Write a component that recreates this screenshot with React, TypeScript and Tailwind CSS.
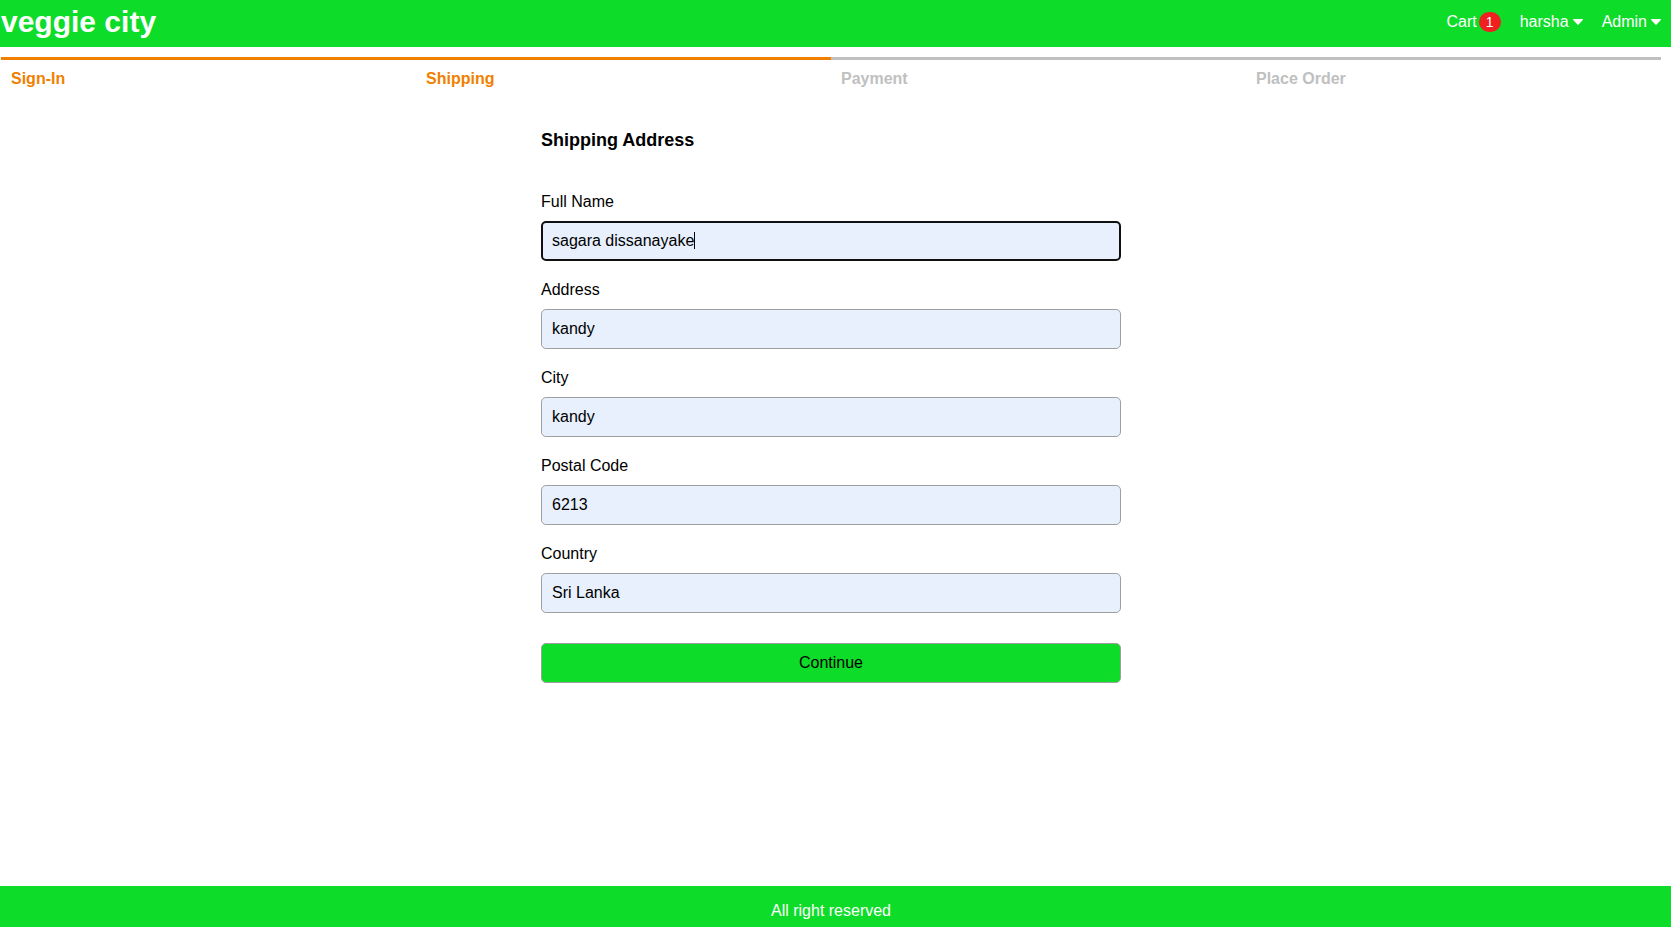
import { useState } from 'react';

const steps = [
  { name: 'Sign-In', done: true },
  { name: 'Shipping', done: true },
  { name: 'Payment', done: false },
  { name: 'Place Order', done: false },
];

const fields = [
  { id: 'fullName', label: 'Full Name', value: 'sagara dissanayake' },
  { id: 'address', label: 'Address', value: 'kandy' },
  { id: 'city', label: 'City', value: 'kandy' },
  { id: 'postalCode', label: 'Postal Code', value: '6213' },
  { id: 'country', label: 'Country', value: 'Sri Lanka' },
];

function Caret() {
  return (
    <svg width="10" height="6" viewBox="0 0 10 6" fill="currentColor" aria-hidden="true">
      <path d="M0.6 0h8.8c.6 0 .8.6.4 1L5.6 5.4c-.3.3-.9.3-1.2 0L.2 1C-.2.6 0 0 .6 0z" />
    </svg>
  );
}

function Header() {
  return (
    <header className="flex h-[47px] items-center justify-between bg-[#0ddc28] pr-[10px] pl-px pb-1 text-white">
      <a href="#home" className="text-[30px] leading-[34px] font-bold">
        veggie city
      </a>
      <nav className="flex items-center gap-[19px] leading-5">
        <a href="#cart" className="flex items-center gap-[2px]">
          Cart
          <span className="flex h-5 w-[22px] items-center justify-center rounded-full bg-[#f02020] text-sm">
            1
          </span>
        </a>
        <button type="button" className="flex items-center gap-1">
          harsha <Caret />
        </button>
        <button type="button" className="flex items-center gap-1">
          Admin <Caret />
        </button>
      </nav>
    </header>
  );
}

function CheckoutSteps() {
  return (
    <ol className="mt-[10px] mr-[10px] ml-px grid grid-cols-4">
      {steps.map((step) => (
        <li
          key={step.name}
          className={
            step.done
              ? 'border-t-[3px] border-[#f08000] px-[10px] pt-[10px] leading-[18px] font-bold text-[#f08000]'
              : 'border-t-[3px] border-[#c0c0c0] px-[10px] pt-[10px] leading-[18px] font-bold text-[#c0c0c0]'
          }
        >
          {step.name}
        </li>
      ))}
    </ol>
  );
}

function ShippingForm() {
  const [values, setValues] = useState(fields.map((f) => f.value));
  const [active, setActive] = useState(0);

  return (
    <form
      className="mt-[42px] w-full max-w-[580px] self-center"
      onSubmit={(e) => e.preventDefault()}
    >
      <h1 className="text-lg leading-5 font-bold">Shipping Address</h1>
      <div className="mt-[43px] flex flex-col gap-5">
        {fields.map((field, i) => (
          <div key={field.id} className="flex flex-col gap-[10px]">
            <label htmlFor={field.id} className="leading-[18px]">
              {field.label}
            </label>
            <div className="relative flex">
              <input
                id={field.id}
                type="text"
                value={values[i]}
                onFocus={() => setActive(i)}
                onChange={(e) => setValues(values.map((v, n) => (n === i ? e.target.value : v)))}
                className={
                  active === i
                    ? 'h-10 w-full rounded-[5px] border-2 border-[#101010] bg-[#e8f0fe] px-[9px] outline-none'
                    : 'h-10 w-full rounded-[5px] border border-[#a0a0a0] bg-[#e8f0fe] px-[10px] outline-none'
                }
              />
              {i === 0 && active === 0 && (
                <span className="pointer-events-none absolute top-[11px] left-[153px] h-[17px] w-px bg-black" />
              )}
            </div>
          </div>
        ))}
      </div>
      <button
        type="submit"
        className="mt-[30px] h-10 w-full rounded-[5px] border border-[#a0a0a0] bg-[#0ddc28]"
      >
        Continue
      </button>
    </form>
  );
}

export default function App() {
  return (
    <div className="flex min-h-screen flex-col bg-white font-['Liberation_Sans',Arial,sans-serif] text-base text-black">
      <Header />
      <main className="flex grow flex-col">
        <CheckoutSteps />
        <div className="mr-[10px] ml-px flex flex-col">
          <ShippingForm />
        </div>
      </main>
      <footer className="bg-[#0ddc28] pt-4 pr-[10px] pb-[7px] pl-px text-center leading-[18px] text-white">
        All right reserved
      </footer>
    </div>
  );
}
